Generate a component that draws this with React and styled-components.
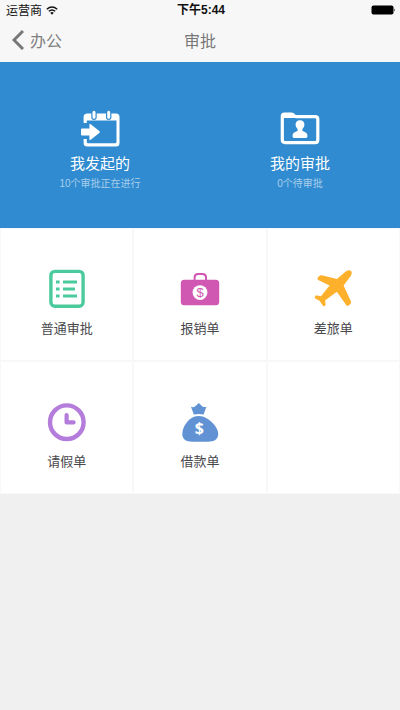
import React from "react";
import styled, {createGlobalStyle} from "styled-components";

const GlobalStyle = createGlobalStyle`
  * {
    box-sizing: border-box;
  }

  body {
    margin: 0;
    background: #f0f0f0;
    font-family: "Noto Sans CJK SC", sans-serif;
  }

  button {
    font-family: inherit;
    border: none;
    padding: 0;
    background: none;
    cursor: pointer;
  }
`

const Header = styled.header`
  background: #f7f7f7;
  padding-bottom: 2px;
`

const StatusBar = styled.div`
  display: grid;
  grid-template-columns: 1fr auto 1fr;
  align-items: center;
  height: 20px;
  padding: 0 4px 0 6px;
  font-size: 12px;
  line-height: 20px;
  color: #111111;
`

const Carrier = styled.div`
  display: flex;
  align-items: center;
  gap: 4px;
`

const Time = styled.span`
  font-family: "Liberation Sans", "Noto Sans CJK SC", sans-serif;
  font-weight: 700;
`

const Battery = styled.svg`
  justify-self: end;
`

const NavBar = styled.nav`
  display: grid;
  grid-template-columns: 1fr auto 1fr;
  align-items: center;
  height: 40px;
  padding: 0 12px;
  color: #777777;
`

const BackButton = styled.button`
  display: flex;
  align-items: center;
  justify-self: start;
  gap: 6px;
  font-size: 16px;
  line-height: 24px;
  color: #808080;
`

const Title = styled.h1`
  margin: 0;
  font-size: 16px;
  font-weight: 400;
  line-height: 24px;
`

const Summary = styled.section`
  display: grid;
  grid-template-columns: 1fr 1fr;
  background: #308bd0;
`

const SummaryItem = styled.button`
  display: flex;
  flex-direction: column;
  align-items: center;
  padding: 48px 0 36px;
  color: #ffffff;
`

const SummaryLabel = styled.span`
  margin-top: 3px;
  font-size: 15px;
  line-height: 24px;
`

const SummaryCount = styled.span`
  margin-top: 1px;
  font-family: "Liberation Sans", "Noto Sans CJK SC", sans-serif;
  font-size: 10px;
  line-height: 16px;
  color: #a9cfec;
`

const Grid = styled.section`
  display: grid;
  grid-template-columns: repeat(3, 1fr);
  background: #ffffff;
`

const tileStyle = `
  display: flex;
  flex-direction: column;
  align-items: center;
`

const Tile = styled.button`
  ${tileStyle}
  && {
    border: 1px solid #f8f8f8;
    padding: 40px 0 23px;
  }
  color: ${props => props.$color};
`

const EmptyTile = styled.div`
  ${tileStyle}
  border: 1px solid #f8f8f8;
`

const TileLabel = styled.span`
  margin-top: 10px;
  font-size: 13px;
  line-height: 18px;
  color: #48484c;
`

const IconSvg = ({height = 40, children}) => (
    <svg width="40" height={height} viewBox={`0 0 40 ${height}`} fill="none" aria-hidden="true">
        {children}
    </svg>
)

const CalendarIcon = () => (
    <IconSvg height={38}>
        <path d="M3.6 13V7Q3.6 3.5 7.5 3.5H36Q39.5 3.5 39.5 7V33Q39.5 36.5 36 36.5H7.5Q3.6 36.5 3.6 33V29H6.8V32Q6.8 33.3 8.3 33.3H35Q36.5 33.3 36.5 32V10.5H6.8V13Z" fill="currentColor"/>
        <path d="M14 2.5V7.2M28.7 2.5V7.2" stroke="#308bd0" strokeWidth="5.4" strokeLinecap="round"/>
        <path d="M14 2.2V7.2M28.7 2.2V7.2" stroke="currentColor" strokeWidth="3" strokeLinecap="round"/>
        <path d="M2 18.5H9.4V15Q9.4 13.1 11 14.4L19.3 21Q20.4 22 19.3 23L11 29.6Q9.4 30.9 9.4 29V25.5H2Q1 25.5 1 24.5V19.5Q1 18.5 2 18.5Z" fill="currentColor"/>
    </IconSvg>
)

const FolderIcon = () => (
    <IconSvg height={38}>
        <path d="M2.3 7V6Q2.3 4 4.3 4H11.5Q13 4 13.7 5.2Q14.3 6.6 16 6.6H35.2Q37.8 6.6 37.8 9.2V30Q37.8 32.6 35.2 32.6H4.9Q2.3 32.6 2.3 30Z" stroke="currentColor" strokeWidth="3.2"/>
        <path d="M2 4.5H13L15 8H2Z" fill="currentColor"/>
        <path d="M20 10.2C22.9 10.2 24.4 12 24.4 14.6C24.4 16.6 23.6 18 22.4 19.1V21.1C25 22 27.4 23 27.4 25.6V26.6Q27.4 28 26 28H14Q12.6 28 12.6 26.6V25.6C12.6 23 15 22 17.6 21.1V19.1C16.4 18 15.6 16.6 15.6 14.6C15.6 12 17.1 10.2 20 10.2Z" fill="currentColor"/>
    </IconSvg>
)

const ListIcon = () => (
    <IconSvg>
        <rect x="3.9" y="2.4" width="32.2" height="34.8" rx="4" stroke="currentColor" strokeWidth="3.4"/>
        <path d="M9 13H12.6M9 20H12.6M9 27H12.6M16 13H30M16 20H28M16 27H30" stroke="currentColor" strokeWidth="3.2"/>
    </IconSvg>
)

const BriefcaseIcon = () => (
    <IconSvg>
        <path d="M14.6 12V8.5Q14.6 5 18 5H22.6Q26 5 26 8.5V12" stroke="currentColor" strokeWidth="2"/>
        <rect x="0.8" y="10.8" width="38.4" height="25.4" rx="3.5" fill="currentColor"/>
        <circle cx="20" cy="23.6" r="7.4" fill="#ffffff"/>
        <text x="20" y="28.2" textAnchor="middle" fontFamily="Liberation Sans, sans-serif" fontSize="13" fill="currentColor">$</text>
    </IconSvg>
)

const PlaneIcon = () => (
    <IconSvg>
        <path d="M4.9 8.4L6.6 6.8Q7.5 6 8.8 6.3L24 10L32.4 2.8Q36 0.4 38 2Q39.8 4 37.4 7.4L30.6 16.4L38 32.6Q38.4 33.9 37.4 34.9L35.7 36.5Q34.2 37.6 33.2 36L23.8 22.8L12 31.4L12.6 35.2Q12.6 36.2 11.7 36.9Q10.5 37.5 9.8 36.6L6.5 31.8L2.3 29.4Q1.1 28.5 2.2 27.2Q3 26.2 4 26.4L8 27.2L16.6 16.6L5.2 10.9Q3.7 9.8 4.9 8.4Z" fill="currentColor"/>
    </IconSvg>
)

const ClockIcon = () => (
    <IconSvg>
        <circle cx="19.8" cy="20.2" r="16.8" stroke="currentColor" strokeWidth="4.4"/>
        <path d="M19.6 13V20.4H26.6" stroke="currentColor" strokeWidth="4.2" strokeLinecap="round" strokeLinejoin="round"/>
    </IconSvg>
)

const MoneyBagIcon = () => (
    <IconSvg>
        <path d="M11 4.8Q12.8 5.8 15 4.6L18.8 1L22.4 4.4Q24.4 5.6 26.4 4.8L23.6 12.6Q18.7 11.2 13.8 12.6Z" fill="currentColor"/>
        <path d="M13.8 14.8Q18.7 13 23.6 14.8C30 17.4 38.2 25 38.2 32C38.2 37.5 34 39.7 28 39.7H12.2C6.2 39.7 2.3 37.5 2.3 32C2.3 25 7.8 17.4 13.8 14.8Z" fill="currentColor"/>
        <text x="19.4" y="32" textAnchor="middle" fontFamily="Noto Sans, sans-serif" fontSize="16" fontWeight="700" fill="#ffffff">$</text>
    </IconSvg>
)

const summaryItems = [
    {label: "我发起的", count: "10个审批正在进行", Icon: CalendarIcon},
    {label: "我的审批", count: "0个待审批", Icon: FolderIcon},
];

const tiles = [
    {label: "普通审批", color: "#4bcb9d", Icon: ListIcon},
    {label: "报销单", color: "#d058b2", Icon: BriefcaseIcon},
    {label: "差旅单", color: "#fcb02c", Icon: PlaneIcon},
    {label: "请假单", color: "#b47ddb", Icon: ClockIcon},
    {label: "借款单", color: "#6193d4", Icon: MoneyBagIcon},
];

const App = () => {
    return (
        <>
            <GlobalStyle/>
            <Header>
                <StatusBar>
                    <Carrier>
                        运营商
                        <svg width="12" height="9" viewBox="0 0 12 9" fill="none" aria-hidden="true">
                            <path d="M0.8 3.2Q6 -1.2 11.2 3.2M2.8 5.3Q6 2.6 9.2 5.3" stroke="#111111" strokeWidth="1.5"/>
                            <path d="M4.2 6.8Q6 5.4 7.8 6.8L6 8.8Z" fill="#111111"/>
                        </svg>
                    </Carrier>
                    <Time>下午5:44</Time>
                    <Battery width="25" height="10" viewBox="0 0 25 10" aria-hidden="true">
                        <rect x="0.5" y="0.5" width="22" height="9" rx="2" fill="#000000"/>
                        <path d="M23.2 3.4Q24.8 5 23.2 6.6Z" fill="#000000"/>
                    </Battery>
                </StatusBar>
                <NavBar>
                    <BackButton>
                        <svg width="12" height="20" viewBox="0 0 12 20" fill="none" aria-hidden="true">
                            <path d="M11 1L2 10L11 19" stroke="#777777" strokeWidth="3"/>
                        </svg>
                        办公
                    </BackButton>
                    <Title>审批</Title>
                </NavBar>
            </Header>
            <main>
                <Summary>
                    {summaryItems.map(({label, count, Icon}) => (
                        <SummaryItem key={label}>
                            <Icon/>
                            <SummaryLabel>{label}</SummaryLabel>
                            <SummaryCount>{count}</SummaryCount>
                        </SummaryItem>
                    ))}
                </Summary>
                <Grid>
                    {tiles.map(({label, color, Icon}) => (
                        <Tile key={label} $color={color}>
                            <Icon/>
                            <TileLabel>{label}</TileLabel>
                        </Tile>
                    ))}
                    <EmptyTile/>
                </Grid>
            </main>
        </>
    )
}

export default App;
